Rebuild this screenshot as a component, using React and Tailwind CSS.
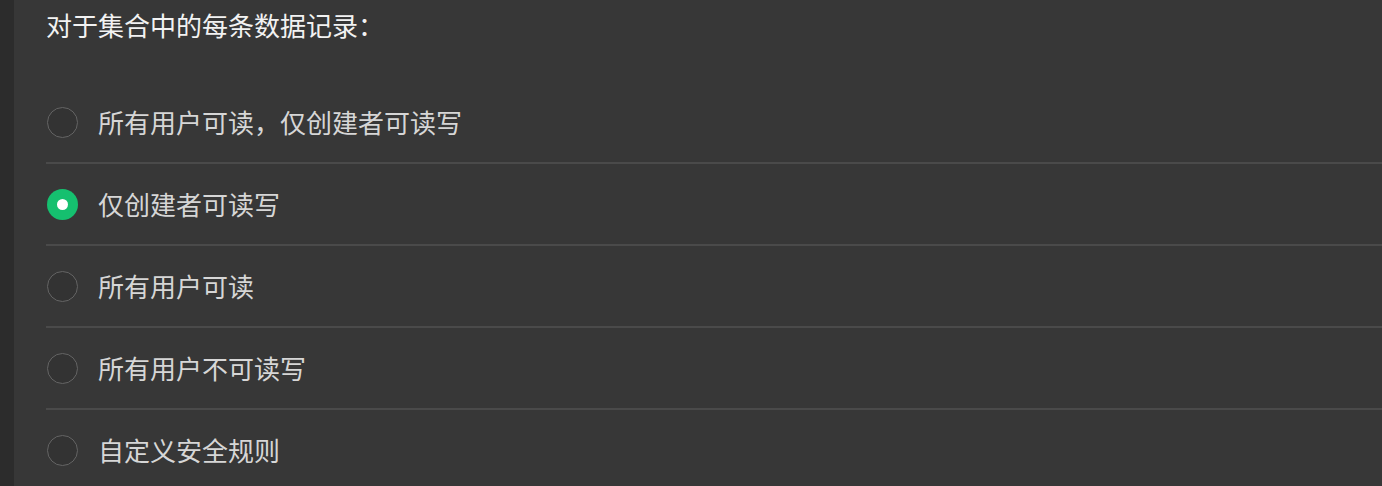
const options = [
  { label: '所有用户可读，仅创建者可读写', checked: false },
  { label: '仅创建者可读写', checked: true },
  { label: '所有用户可读', checked: false },
  { label: '所有用户不可读写', checked: false },
  { label: '自定义安全规则', checked: false },
];

function Radio({ checked }) {
  if (checked) {
    return (
      <span className="flex h-[31px] w-[31px] shrink-0 items-center justify-center rounded-full bg-[#15c06f]">
        <span className="h-[11px] w-[11px] rounded-full bg-white" />
      </span>
    );
  }
  return <span className="h-[31px] w-[31px] shrink-0 rounded-full border border-[#646464] bg-[#333333]" />;
}

export default function App() {
  return (
    <div
      className="flex h-[486px] w-[1382px] overflow-hidden bg-[#373737]"
      style={{ fontFamily: '"Noto Sans CJK SC", "Noto Sans", sans-serif' }}
    >
      <div className="w-[14px] shrink-0 bg-[#2c2c2c]" />
      <div className="flex-1 pl-[32px]">
        <div className="flex h-[82px] items-start pt-[6px] text-[26px] leading-[38px] text-[#f2f2f2]">
          对于集合中的每条数据记录：
        </div>
        {options.map((opt, i) => (
          <div key={i}>
            <div className="flex h-[80px] items-center gap-[20px] pl-[1px]">
              <Radio checked={opt.checked} />
              <span className="text-[26px] leading-none text-[#d6d6d6]">{opt.label}</span>
            </div>
            {i < options.length - 1 && <div className="h-[2px] bg-[#4a4a4a]" />}
          </div>
        ))}
      </div>
    </div>
  );
}
